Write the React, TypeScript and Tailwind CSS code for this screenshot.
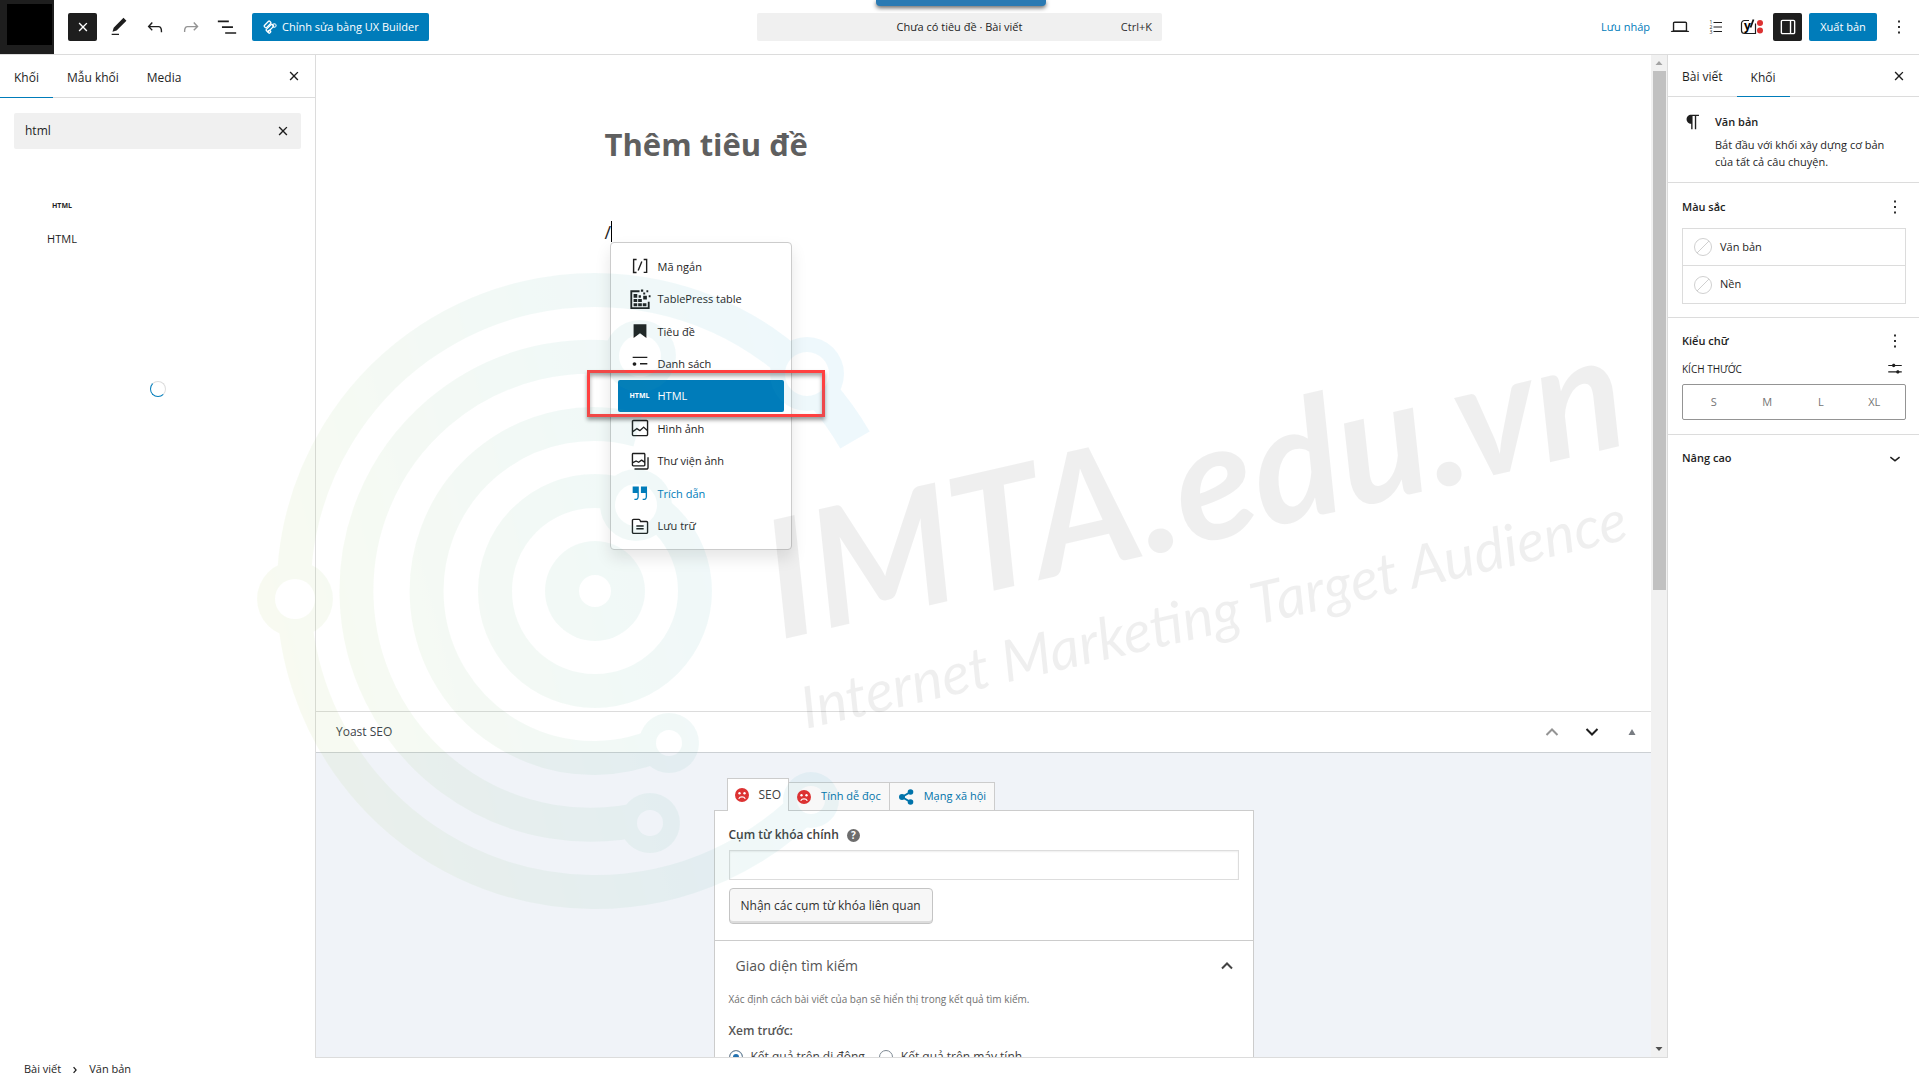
import React, { useState } from 'react';

const icons = {
  close:
    'M12 13.06l3.712 3.713 1.061-1.06L13.061 12l3.712-3.712-1.06-1.06L12 10.938 8.288 7.227l-1.061 1.06L10.939 12l-3.712 3.712 1.06 1.061L12 13.061z',
  edit: 'M20.1 5.1L16.9 2 6.2 12.7l-1.3 4.4 4.5-1.3L20.1 5.1zM4 20.8h8v-1.5H4v1.5z',
  undo: 'M18.3 11.7c-.6-.6-1.4-.9-2.3-.9H6.7l2.9-3.3-1.1-1-4.5 5L8.5 16l1-1-2.7-2.7H16c.5 0 .9.2 1.3.5 1 1 1 3.4 1 4.5v.3h1.5v-.2c0-1.5 0-4.3-1.5-5.7z',
  redo: 'M15.6 6.5l-1.1 1 2.9 3.3H8c-.9 0-1.7.3-2.3.9-1.4 1.5-1.4 4.2-1.4 5.6v.2h1.5v-.3c0-1.1 0-3.5 1-4.5.3-.3.7-.5 1.3-.5h9.2L14.5 15l1.1 1.1 4.6-4.6-4.6-5z',
  listView: 'M2 5h12v1.8H2V5Zm4.5 6.3h12v1.8h-12v-1.8ZM22 17.6H10v1.8h12v-1.8Z',
  laptop:
    'M20.5 16h-.7V8c0-1.1-.9-2-2-2H6.2c-1.1 0-2 .9-2 2v8h-.7c-.8 0-1.5.7-1.5 1.5h20c0-.8-.7-1.5-1.5-1.5zM5.7 8c0-.3.2-.5.5-.5h11.6c.3 0 .5.2.5.5v7.6H5.7V8z',
  drawer:
    'M18 4H6c-1.1 0-2 .9-2 2v12c0 1.1.9 2 2 2h12c1.1 0 2-.9 2-2V6c0-1.1-.9-2-2-2zm-4 14.5H6c-.3 0-.5-.2-.5-.5V6c0-.3.2-.5.5-.5h8v13zm4.5-.5c0 .3-.2.5-.5.5h-2.5v-13H18c.3 0 .5.2.5.5v12z',
  more: 'M13 19h-2v-2h2v2zm0-6h-2v-2h2v2zm0-6h-2V5h2v2z',
  paragraph:
    'm9.996 14v-.2251l.004.0001v6.225h1.5v-14.5h2.5v14.5h1.5v-14.5h3v-1.5h-8.504c-2.761 0-5 2.239-5 5 0 2.761 2.239 5 5 5z',
  settings:
    'm21 6.5h-8.628c-.309-.874-1.142-1.5-2.122-1.5-.98 0-1.813.626-2.122 1.5h-5.128v1.5h5.128c.309.874 1.142 1.5 2.122 1.5.98 0 1.813-.626 2.122-1.5h8.628z M21 15h-3.128c-.309-.874-1.142-1.5-2.122-1.5s-1.813.626-2.122 1.5h-10.628v1.5h10.628c.309.874 1.142 1.5 2.122 1.5s1.813-.626 2.122-1.5h3.128z',
  chevronDown: 'M17.5 11.6L12 16l-5.5-4.4.9-1.2L12 14l4.5-3.6 1 1.2z',
  chevronRight:
    'M10.862 8.04L14.28 12.03L10.862 16.017L9.723 15.04L12.305 12.03L9.723 9.017L10.862 8.04Z',
  shortcode:
    'M16 4.2v1.5h2.5v12.5H16v1.5h4V4.2h-4zM4.2 19.8h4v-1.5H5.8V5.8h2.5V4.2h-4l-.1 15.6zm5.1-3.1l1.4.6 4-10-1.4-.6-4 10z',
  tablepress:
    'M1.5 2.500h10v2h-8V21h17v-6h2v8h-21V2.500zM5 6.500h4v4H5v-4zM5 12h4v3.300H5V12zm0 4.600h4V20H5v-3.400zM10 12h4v3.300h-4V12zm0 4.600h4V20h-4v-3.400zM15 16.600h4V20h-4v-3.400zM10.500 8h2.500v2.500h-2.500V8zM15.500 8.500h4v4h-4v-4zM13 1.500h2.500V4H13V1.500zM19 2.500h2v2h-2v-2zM15.500 5h2.200v2.200h-2.200V5zM21.500 8h2v2h-2V8z',
  heading: 'M5 4.500V19.500L12 14.500L19 19.500V4.500H5Z',
  list: 'M4 4v1.5h16V4H4zm8 8.500h8V11h-8v1.500zM4 20h16v-1.500H4V20zm4-8c0-1.100-.9-2-2-2s-2 .9-2 2 .9 2 2 2 2-.9 2-2z',
  image:
    'M19 3H5c-1.100 0-2 .9-2 2v14c0 1.100.9 2 2 2h14c1.100 0 2-.9 2-2V5c0-1.100-.9-2-2-2zM5 4.500h14c.3 0 .5.2.5.5v8.400l-3-2.900c-.3-.3-.8-.3-1 0L11.900 14 9 12c-.3-.2-.6-.2-.8 0l-3.600 2.600V5c-.1-.3.1-.5.4-.5zm14 15H5c-.3 0-.5-.2-.5-.5v-2.400l4.100-3 3 1.900c.3.2.7.2.9-.1L16 12l3.500 3.400V19c0 .3-.2.5-.5.5z',
  gallery:
    'M16.375 4.500H4.625a.125.125 0 0 0-.125.125v8.254l2.859-1.540a.75.75 0 0 1 .68-.016l2.384 1.142 2.890-2.074a.75.75 0 0 1 .874 0l2.313 1.660V4.625a.125.125 0 0 0-.125-.125Zm.125 9.398-2.750-1.975-2.813 2.020a.75.75 0 0 1-.76.067l-2.444-1.170L4.500 14.583v1.792c0 .069.056.125.125.125h11.750a.125.125 0 0 0 .125-.125v-2.477ZM4.625 3C3.728 3 3 3.728 3 4.625v11.750C3 17.273 3.728 18 4.625 18h11.750c.898 0 1.625-.727 1.625-1.625V4.625C18 3.728 17.273 3 16.375 3H4.625ZM20 8v11c0 .69-.31 1-.999 1H6v1.500h13.001c1.520 0 2.499-.982 2.499-2.500V8H20Z',
  quote:
    'M13 5v7h5.200v4c0 .8-.2 1.400-.5 1.700-.6.6-1.600.6-2.500.5h-.3v1.500h.5c1 0 2.300-.1 3.300-1 .6-.6 1-1.600 1-2.800V5H13zm-9 7h5.200v4c0 .8-.2 1.400-.5 1.700-.6.6-1.600.6-2.500.5h-.3v1.500h.5c1 0 2.300-.1 3.300-1 .6-.6 1-1.600 1-2.800V5H4v7z',
  archive:
    'M19 6.200h-5.900l-.6-1.100c-.3-.7-1-1.100-1.800-1.100H5c-1.100 0-2 .9-2 2v12.800c0 1.100.9 2 2 2h14c1.100 0 2-.9 2-2V8.200c0-1.100-.9-2-2-2zm.5 12.600c0 .3-.2.5-.5.5H5c-.3 0-.5-.2-.5-.5V6c0-.3.2-.5.5-.5h5.800c.2 0 .4.1.4.3l1 2H19c.3 0 .5.2.5.5v10.500zM8 12.800h8v-1.500H8v1.500zm0 3h8v-1.500H8v1.500z',
};

type IconName = keyof typeof icons;

function Icon({ name, className = 'size-[22px]' }: { name: IconName; className?: string }) {
  return (
    <svg viewBox="0 0 24 24" className={`shrink-0 fill-current ${className}`} aria-hidden="true">
      <path d={icons[name]} fillRule={name === 'gallery' ? 'evenodd' : undefined} />
    </svg>
  );
}

function IconButton({ name, label, className = '' }: { name: IconName; label: string; className?: string }) {
  return (
    <button type="button" aria-label={label} className={`flex h-7 w-[29px] items-center justify-center rounded-xs ${className}`}>
      <Icon name={name} />
    </button>
  );
}

function Header() {
  return (
    <header className="relative flex h-[55px] shrink-0 items-center border-b border-[#dcdcdc]">
      <div className="flex h-full flex-1 items-center gap-[7px]">
        <div className="mr-[7px] h-full w-[54px] shrink-0 bg-[#1e1e1e] pt-1 pl-[7px]">
          <div className="h-[41px] w-[45px] bg-black" />
        </div>
        <IconButton name="close" label="Đóng" className="bg-[#1e1e1e] text-white" />
        <IconButton name="edit" label="Công cụ" />
        <IconButton name="undo" label="Hoàn tác" />
        <IconButton name="redo" label="Làm lại" className="text-[#949494]" />
        <IconButton name="listView" label="Danh sách khối" />
        <button type="button" className="ml-1 flex h-7 items-center gap-1 rounded-xs bg-[#007cba] px-2.5 font-medium text-white">
          <svg viewBox="0 0 16 16" className="size-4 fill-none stroke-white" strokeWidth="1.300" aria-hidden="true">
            <rect x="1.800" y="4" width="7.500" height="3" rx="0.800" transform="rotate(-45 5.500 5.500)" />
            <rect x="3.600" y="7.500" width="8.500" height="3" rx="0.800" transform="rotate(-45 7.800 9)" />
            <rect x="10.800" y="5" width="3" height="3" rx="0.600" transform="rotate(-45 12.300 6.500)" strokeOpacity="0.700" />
            <rect x="6" y="11.500" width="2.500" height="2.500" rx="0.600" transform="rotate(-45 7.200 12.700)" />
          </svg>
          Chỉnh sửa bằng UX Builder
        </button>
      </div>
      <button type="button" className="grid h-7 w-[405px] grid-cols-[1fr_auto_1fr] items-center rounded-xs bg-[#f0f0f0] px-2.5">
        <span />
        <span>Chưa có tiêu đề · Bài viết</span>
        <span className="text-right text-[#2f2f2f]">Ctrl+K</span>
      </button>
      <div className="flex flex-1 items-center justify-end gap-[7px]">
        <a href="#draft" className="mr-2 text-[#007cba]">Lưu nháp</a>
        <IconButton name="laptop" label="Xem" />
        <button type="button" aria-label="Mục lục" className="flex h-7 w-[29px] items-center justify-center">
          <svg viewBox="0 0 16 16" className="size-4 overflow-visible" aria-hidden="true">
            <path d="M5.500 3.500H14M5.500 8H14M5.500 12.500H14" stroke="#1e1e1e" strokeWidth="1.200" />
            <text x="1.500" y="5" fontSize="5" fill="#1e1e1e">1</text>
            <text x="1.500" y="10" fontSize="5" fill="#1e1e1e">2</text>
            <text x="1.500" y="15" fontSize="5" fill="#1e1e1e">3</text>
          </svg>
        </button>
        <button type="button" aria-label="Yoast SEO" className="flex h-7 w-[29px] items-center justify-center">
          <svg viewBox="0 0 24 16" className="h-4 w-6 overflow-visible" aria-hidden="true">
            <path d="M9 1.500H4.500a3 3 0 0 0-3 3v7a3 3 0 0 0 3 3H15.500V4.500" fill="none" stroke="#1e1e1e" strokeWidth="1.200" />
            <text x="4" y="11" fontSize="12" fontWeight="bold">y</text>
            <path d="M13.500 0.500L10.500 8.500" stroke="#111" strokeWidth="1.800" />
            <circle cx="20" cy="4" r="3" fill="#dc3232" />
            <circle cx="20" cy="11.500" r="3" fill="#dc3232" />
          </svg>
        </button>
        <IconButton name="drawer" label="Cài đặt" className="bg-[#1e1e1e] text-white" />
        <button type="button" className="h-7 w-[68px] rounded-xs bg-[#007cba] font-medium text-white">Xuất bản</button>
        <IconButton name="more" label="Tùy chọn" className="mr-1.5" />
      </div>
      {/* toast sliding out from the top edge */}
      <div className="absolute top-0 left-[876px] h-1.5 w-[170px] rounded-b-sm bg-[#2a7ab3] shadow-[0_2px_4px_rgba(0,0,0,0.6)]" />
    </header>
  );
}

function Inserter() {
  const [query, setQuery] = useState('html');

  return (
    <aside className="flex w-[316px] shrink-0 flex-col border-r border-[#dcdcdc]">
      <div className="flex h-[43px] shrink-0 items-stretch border-b border-[#dcdcdc] pr-[7px] text-xs font-medium">
        <button type="button" className="-mb-px border-b border-[#007cba] px-[14px] pt-1">Khối</button>
        <button type="button" className="px-[14px] pt-[3px]">Mẫu khối</button>
        <button type="button" className="px-[14px] pt-[3px]">Media</button>
        <IconButton name="close" label="Đóng" className="mt-[7px] ml-auto" />
      </div>
      <div className="mx-3.5 mt-[15px] flex h-9 shrink-0 items-center rounded-xs bg-[#f0f0f0] pr-1 pl-[11px]">
        <input
          aria-label="Tìm kiếm"
          value={query}
          onChange={e => setQuery(e.target.value)}
          className="min-w-0 flex-1 bg-transparent text-xs outline-none"
        />
        <IconButton name="close" label="Xóa tìm kiếm" />
      </div>
      <button type="button" className="mt-[47px] ml-[14px] flex w-24 flex-col items-center gap-[15px]">
        <span className="text-[7px] leading-[20px] font-bold">HTML</span>
        <span className="leading-4 text-[#1e1e1e]">HTML</span>
      </button>
      <div className="mt-[134px] flex justify-center">
        <div className="size-4 rounded-full border-[1.5px] border-[#ddd] border-b-[#007cba] border-l-[#007cba]" />
      </div>
    </aside>
  );
}

const suggestions: { icon?: IconName; label: string }[] = [
  { icon: 'shortcode', label: 'Mã ngắn' },
  { icon: 'tablepress', label: 'TablePress table' },
  { icon: 'heading', label: 'Tiêu đề' },
  { icon: 'list', label: 'Danh sách' },
  { label: 'HTML' },
  { icon: 'image', label: 'Hình ảnh' },
  { icon: 'gallery', label: 'Thư viện ảnh' },
  { icon: 'quote', label: 'Trích dẫn' },
  { icon: 'archive', label: 'Lưu trữ' },
];

function SlashMenu() {
  return (
    <div className="absolute top-full left-[5px] flex h-[308px] w-[182px] flex-col rounded border border-[#ccc] bg-white p-[7px] text-[11px] shadow-[0_8px_16px_rgba(0,0,0,0.1)]">
      {suggestions.map(item => {
        const active = item.label === 'HTML';
        const hovered = item.icon === 'quote';
        return (
          <button
            key={item.label}
            type="button"
            className={`flex flex-1 items-center gap-[7px] rounded-xs pl-[11px] ${
              active ? 'bg-[#007cba] font-medium text-white' : hovered ? 'text-[#007cba]' : 'text-[#1e1e1e]'
            }`}
          >
            {item.icon ? (
              <Icon name={item.icon} />
            ) : (
              <span className="w-[22px] text-center text-[7px] font-bold">HTML</span>
            )}
            {item.label}
          </button>
        );
      })}
      {/* highlight around the HTML entry */}
      <div className="pointer-events-none absolute top-[127px] -left-[24px] h-[47px] w-[238px] border-3 border-[#ff4040] shadow-[0_3px_4px_rgba(0,0,0,0.4),inset_0_3px_4px_rgba(0,0,0,0.35)]" />
    </div>
  );
}

function Canvas() {
  return (
    <section className="min-h-0 flex-1">
      <div className="mx-auto w-[758px] pt-[65px]">
        <h1 className="text-[31px] leading-[48px] font-bold text-[#5f5f5f]">Thêm tiêu đề</h1>
        <div className="relative mt-[53px] flex h-[21px] items-center text-lg">
          <span>/</span>
          <span className="h-[21px] w-px bg-black" />
          <SlashMenu />
        </div>
      </div>
    </section>
  );
}

function SadFace() {
  return (
    <svg viewBox="0 0 14 14" className="size-3.5 shrink-0" aria-hidden="true">
      <circle cx="7" cy="7" r="7" fill="#dc3232" />
      <circle cx="4.500" cy="5.200" r="1.200" fill="#fff" />
      <circle cx="9.500" cy="5.200" r="1.200" fill="#fff" />
      <path d="M3.700 10.700C5 8.300 9 8.300 10.300 10.700" fill="none" stroke="#fff" strokeWidth="1.200" />
    </svg>
  );
}

function YoastBox() {
  const [keyphrase, setKeyphrase] = useState('');
  const [mode, setMode] = useState('mobile');

  return (
    <section className="flex h-[346px] shrink-0 flex-col border-t border-[#dcdcdc] text-xs">
      <div className="flex h-[41px] shrink-0 items-center border-b border-[#ccd0d4] pr-[9px] pl-5">
        <h2 className="font-medium text-[#3c434a]">Yoast SEO</h2>
        <div className="ml-auto flex items-center gap-5 text-[#1e1e1e]">
          <button type="button" aria-label="Lên" className="text-[#949494]">
            <svg viewBox="0 0 20 20" className="size-5 fill-none stroke-current stroke-2"><path d="M4.500 13L10 7.500l5.500 5.500" /></svg>
          </button>
          <button type="button" aria-label="Xuống">
            <svg viewBox="0 0 20 20" className="size-5 fill-none stroke-current stroke-2"><path d="M4.500 7L10 12.500 15.500 7" /></svg>
          </button>
          <button type="button" aria-label="Thu gọn" className="text-[#787c82]">
            <svg viewBox="0 0 20 20" className="size-5 fill-current"><path d="M6.500 13L10 7l3.500 6z" /></svg>
          </button>
        </div>
      </div>
      <div className="min-h-0 flex-1 overflow-hidden bg-[#f0f3f8] pt-[25px] text-[#404040]">
        <div className="mx-auto w-[540px]">
          <div className="flex items-end pl-[13px]">
            <button type="button" className="-mb-px flex h-[33px] items-center gap-2.5 border border-b-0 border-[#ccc] bg-white px-[7px]">
              <SadFace />SEO
            </button>
            <button type="button" className="flex h-7 items-center gap-2.5 border border-b-0 border-l-0 border-[#ccc] bg-[#f8f8f8] px-2 text-[11px] text-[#0073aa]">
              <SadFace />Tính dễ đọc
            </button>
            <button type="button" className="flex h-7 items-center gap-2.5 border border-b-0 border-l-0 border-[#ccc] bg-[#f8f8f8] px-2 text-[11px] text-[#0073aa]">
              <svg viewBox="0 0 16 16" className="size-4 fill-current" aria-hidden="true">
                <circle cx="4" cy="8" r="3" />
                <circle cx="12.500" cy="3" r="2.800" />
                <circle cx="12.500" cy="13" r="2.800" />
                <path d="M12.500 3L4 8l8.500 5" fill="none" stroke="currentColor" strokeWidth="2" />
              </svg>
              Mạng xã hội
            </button>
          </div>
          <div className="border border-[#ccc] bg-white">
            <div className="border-b border-[#ccc] px-3.5 py-4">
              <div className="flex items-center gap-2 leading-4">
                <label htmlFor="keyphrase" className="font-semibold">Cụm từ khóa chính</label>
                <button type="button" aria-label="Trợ giúp" className="size-[13px] rounded-full bg-[#6d6d6d] text-[10px] leading-[13px] font-bold text-white">?</button>
              </div>
              <input
                id="keyphrase"
                value={keyphrase}
                onChange={e => setKeyphrase(e.target.value)}
                className="mt-[7px] block h-[30px] w-full border border-[#ddd] px-2 shadow-[inset_0_1px_2px_rgba(0,0,0,0.07)]"
              />
              <button type="button" className="mt-2 h-9 rounded border border-[#c4c4c4] bg-[#f7f7f7] px-[11px] text-[#303030] shadow-[inset_0_-2px_0_#dcdcdc]">
                Nhận các cụm từ khóa liên quan
              </button>
            </div>
            <div className="px-3.5 pt-[15px]">
              <div className="flex h-5 items-center justify-between pl-[7px]">
                <h3 className="text-sm text-[#555]">Giao diện tìm kiếm</h3>
                <button type="button" aria-label="Thu gọn giao diện tìm kiếm" className="mr-1 text-[#444]">
                  <svg viewBox="0 0 16 16" className="size-4 fill-none stroke-current stroke-2"><path d="M3 10.500l5-5 5 5" /></svg>
                </button>
              </div>
              <p className="mt-[15px] text-[10px] leading-4 text-[#707070]">
                Xác định cách bài viết của bạn sẽ hiển thị trong kết quả tìm kiếm.
              </p>
              <fieldset className="mt-4">
                <legend className="leading-4 font-semibold text-[#555]">Xem trước:</legend>
                <div className="mt-2.5 flex items-center gap-3.5">
                  {[
                    { id: 'mobile', label: 'Kết quả trên di động' },
                    { id: 'desktop', label: 'Kết quả trên máy tính' },
                  ].map(option => (
                    <label key={option.id} className="flex items-center gap-2">
                      <input
                        type="radio"
                        name="preview"
                        checked={mode === option.id}
                        onChange={() => setMode(option.id)}
                        className="size-3.5 appearance-none rounded-full border border-[#7e8993] bg-white checked:bg-[#2271b1] checked:shadow-[inset_0_0_0_3px_white]"
                      />
                      {option.label}
                    </label>
                  ))}
                </div>
              </fieldset>
            </div>
          </div>
        </div>
      </div>
    </section>
  );
}

function Scrollbar() {
  return (
    <div className="flex w-4 shrink-0 flex-col items-center bg-[#f1f1f1]">
      <svg viewBox="0 0 16 16" className="size-4 shrink-0"><path d="M4.500 10L8 6l3.500 4z" fill="#a3a3a3" /></svg>
      <div className="h-[519px] w-[13px] bg-[#c1c1c1]" />
      <svg viewBox="0 0 16 16" className="mt-auto size-4 shrink-0"><path d="M4.500 6L8 10l3.500-4z" fill="#505050" /></svg>
    </div>
  );
}

function ColorRow({ label, className = '' }: { label: string; className?: string }) {
  return (
    <button type="button" className={`flex h-[37px] w-full items-center gap-2 px-[11px] ${className}`}>
      <svg viewBox="0 0 18 18" className="size-[18px] fill-none stroke-[#d0d0d0]" aria-hidden="true">
        <circle cx="9" cy="9" r="8.500" />
        <path d="M3 15L15 3" />
      </svg>
      {label}
    </button>
  );
}

function Sidebar() {
  return (
    <aside className="w-[252px] shrink-0 border-l border-[#dcdcdc]">
      <div className="flex h-[42px] border-b border-[#dcdcdc] pr-1.5 text-xs font-medium">
        <button type="button" className="px-[14px] pt-[3px]">Bài viết</button>
        <button type="button" className="-mb-px border-b border-[#007cba] px-[14px] pt-1">Khối</button>
        <IconButton name="close" label="Đóng" className="mt-[7px] ml-auto" />
      </div>
      <div className="flex gap-[11px] border-b border-[#dcdcdc] px-3.5 pt-3.5 pb-3">
        <Icon name="paragraph" />
        <div className="flex-1">
          <h2 className="leading-[22px] font-semibold">Văn bản</h2>
          <p className="mt-[3px] leading-[17px]">Bắt đầu với khối xây dựng cơ bản của tất cả câu chuyện.</p>
        </div>
      </div>
      <div className="border-b border-[#dcdcdc] pt-2.5 pr-[13px] pb-[13px] pl-3.5">
        <div className="flex h-[28px] items-center justify-between">
          <h2 className="font-semibold">Màu sắc</h2>
          <button type="button" aria-label="Tùy chọn màu sắc"><Icon name="more" /></button>
        </div>
        <div className="mt-[7px] border border-[#dcdcdc]">
          <ColorRow label="Văn bản" className="border-b border-[#dcdcdc]" />
          <ColorRow label="Nền" />
        </div>
      </div>
      <div className="border-b border-[#dcdcdc] pt-[9px] pr-[13px] pb-3.5 pl-3.5">
        <div className="flex h-[28px] items-center justify-between">
          <h2 className="font-semibold">Kiểu chữ</h2>
          <button type="button" aria-label="Tùy chọn kiểu chữ"><Icon name="more" /></button>
        </div>
        <div className="mt-[3px] flex h-[22px] items-center justify-between">
          <h3 className="text-[10px] font-medium uppercase">Kích thước</h3>
          <button type="button" aria-label="Đặt kích thước tùy chỉnh" className="pr-[2px]"><Icon name="settings" className="size-[18px]" /></button>
        </div>
        <div className="mt-1 grid h-9 grid-cols-4 rounded-xs border border-[#949494] px-1 text-[#757575]">
          {['S', 'M', 'L', 'XL'].map(size => (
            <button key={size} type="button">{size}</button>
          ))}
        </div>
      </div>
      <button type="button" className="flex h-[46px] w-full items-center justify-between pr-[13px] pl-3.5 font-semibold">
        Nâng cao
        <Icon name="chevronDown" />
      </button>
    </aside>
  );
}

function Watermark() {
  return (
    <svg viewBox="0 0 1919 1079" className="pointer-events-none absolute inset-0 size-full" aria-hidden="true">
      <defs>
        <linearGradient id="brand" gradientUnits="userSpaceOnUse" x1="257" y1="600" x2="870" y2="440">
          <stop offset="0" stopColor="#a6c84a" />
          <stop offset="0.500" stopColor="#50b090" />
          <stop offset="1" stopColor="#1ca4e0" />
        </linearGradient>
        <mask id="rings" maskUnits="userSpaceOnUse" x="240" y="250" width="660" height="680">
          <g fill="none" stroke="#fff" strokeWidth="34">
            <circle cx="595" cy="591" r="100" />
            <path d="M669 740A167 167 0 1 1 638 430" />
            <path d="M650 817A234 234 0 1 1 635 361" />
            <path d="M816 795A301 301 0 1 1 855 440" />
          </g>
          <g fill="#fff">
            <circle cx="595" cy="591" r="50" />
            <circle cx="295" cy="599" r="38" />
            <circle cx="636" cy="505" r="36" />
            <circle cx="640" cy="356" r="36" />
            <circle cx="807" cy="374" r="37" />
            <circle cx="669" cy="743" r="30" />
            <circle cx="650" cy="823" r="30" />
            <circle cx="811" cy="800" r="28" />
          </g>
          <g fill="#000">
            <circle cx="595" cy="591" r="16" />
            <circle cx="295" cy="599" r="20" />
            <circle cx="636" cy="505" r="21" />
            <circle cx="640" cy="356" r="21" />
            <circle cx="807" cy="374" r="22" />
            <circle cx="669" cy="743" r="13" />
            <circle cx="650" cy="823" r="13" />
            <circle cx="811" cy="800" r="14" />
          </g>
        </mask>
      </defs>
      <rect x="240" y="250" width="660" height="680" fill="url(#brand)" opacity="0.070" mask="url(#rings)" />
      <g fontFamily="Lato, sans-serif" fontStyle="italic" opacity="0.060">
        <text transform="translate(780 640) rotate(-13)" fontSize="164" fontWeight="bold">IMTA.edu.vn</text>
        <text transform="translate(806 729) rotate(-13)" fontSize="58">Internet Marketing Target Audience</text>
      </g>
    </svg>
  );
}

export default function App() {
  return (
    <div className="relative flex h-screen flex-col overflow-hidden bg-white font-['Open_Sans','Noto_Sans',sans-serif] text-[11px] text-[#1e1e1e]">
      <Header />
      <div className="flex min-h-0 flex-1">
        <Inserter />
        <main className="flex min-w-0 flex-1 border-b border-[#dcdcdc]">
          <div className="flex min-w-0 flex-1 flex-col">
            <Canvas />
            <YoastBox />
          </div>
          <Scrollbar />
        </main>
        <Sidebar />
      </div>
      <footer className="flex h-[21px] shrink-0 items-center gap-1 pt-0.5 pl-6">
        <a href="#post">Bài viết</a>
        <Icon name="chevronRight" className="size-5" />
        <span>Văn bản</span>
      </footer>
      <Watermark />
    </div>
  );
}
